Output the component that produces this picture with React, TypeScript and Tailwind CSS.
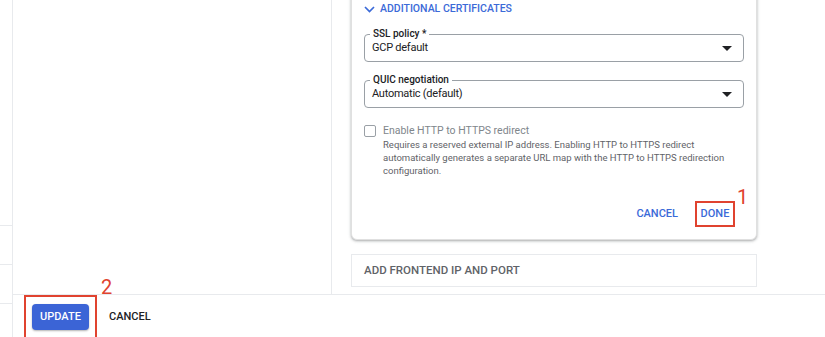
import React from "react";

const Caret = () => (
  <svg width="10" height="5" viewBox="0 0 10 5" className="shrink-0">
    <path d="M0 0 L10 0 L5 5 Z" fill="#202124" />
  </svg>
);

function Select({ label, value }: { label: string; value: string }) {
  return (
    <div className="relative h-[28px] w-[380px] rounded-[4px] border border-[#9aa0a6] flex items-center justify-between pl-[7px] pr-[11px]">
      <span className="absolute left-[5px] top-[-8px] bg-white px-[3px] text-[10px] leading-[14px] font-medium text-[#202124]">
        {label}
      </span>
      <span className="text-[11px] tracking-[-0.25px] text-[#202124]">{value}</span>
      <Caret />
    </div>
  );
}

export default function App() {
  return (
    <div
      className="w-[825px] h-[337px] bg-white flex overflow-hidden"
      style={{ fontFamily: "Roboto, 'Liberation Sans', sans-serif" }}
    >
      {/* left strip */}
      <div className="w-[13px] shrink-0 border-r border-[#e8eaed] flex flex-col">
        <div className="h-[225px]" />
        <div className="h-[39px] border-t border-[#e8eaed]" />
        <div className="h-[39px] border-t border-[#e8eaed]" />
        <div className="flex-1 border-t border-[#e8eaed]" />
      </div>

      <div className="flex-1 flex flex-col">
        {/* content */}
        <div className="h-[297px] flex overflow-hidden">
          <div className="w-[319px] shrink-0 border-r border-[#e8eaed]" />
          <div className="flex-1 pl-[19px] flex flex-col">
            <div className="w-[406px] -mt-[10px] bg-white rounded-b-[6px] border border-[#e0e0e0] shadow-[0_1px_2px_rgba(60,64,67,0.3),0_1px_3px_1px_rgba(60,64,67,0.12)] pl-[12px] pr-[12px] pb-[12px]">
              <div className="h-[10px]" />
              <div className="flex items-center gap-[5px] text-[10.5px] font-medium text-[#3b6ad8] h-[16px]">
                <svg width="11" height="7" viewBox="0 0 11 7">
                  <path d="M1 1 L5.5 5.5 L10 1" stroke="#3b6ad8" strokeWidth="1.7" fill="none" />
                </svg>
                <span>ADDITIONAL CERTIFICATES</span>
              </div>
              <div className="mt-[17px]">
                <Select label="SSL policy *" value="GCP default" />
              </div>
              <div className="mt-[18px]">
                <Select label="QUIC negotiation" value="Automatic (default)" />
              </div>
              <div className="mt-[16px] flex gap-[7px]">
                <div className="mt-[1px] w-[12px] h-[12px] shrink-0 rounded-[2px] border-[1.5px] border-[#9aa0a6]" />
                <div className="flex flex-col">
                  <span className="text-[10.5px] leading-[14px] text-[#80868b]">Enable HTTP to HTTPS redirect</span>
                  <span className="text-[9.5px] leading-[13px] text-[#5f6368] w-[360px]">
                    Requires a reserved external IP address. Enabling HTTP to HTTPS redirect automatically generates a separate URL map with the HTTP to HTTPS redirection configuration.
                  </span>
                </div>
              </div>
              <div className="mt-[24px] flex justify-end items-center pr-[9px]">
                <span className="text-[11px] font-medium text-[#3b6ad8] mr-[17px]">CANCEL</span>
                <div className="relative">
                  <div className="border-2 border-[#e0432f] w-[40px] h-[26px] flex items-center justify-center">
                    <span className="text-[11px] font-medium text-[#3b6ad8]">DONE</span>
                  </div>
                  <span className="absolute left-[42px] top-[-14px] text-[20px] leading-[20px] text-[#e0432f]">1</span>
                </div>
              </div>
            </div>
            <div className="mt-[14px] w-[406px] h-[33px] border border-[#e8eaed] flex items-center pl-[12px]">
              <span className="text-[11.5px] font-medium text-[#5f6368]">ADD FRONTEND IP AND PORT</span>
            </div>
          </div>
        </div>

        {/* footer */}
        <div className="flex-1 border-t border-[#e8eaed] flex items-start pl-[11px]">
          <div className="relative">
            <div className="border-2 border-[#e0432f] border-b-0 w-[73px] h-[42px] pt-[7px] pl-[6px]">
              <div className="w-[57px] h-[26px] rounded-[4px] bg-[#3b64d6] shadow-[0_1px_2px_rgba(0,0,0,0.3)] flex items-center justify-center">
                <span className="text-[11px] font-medium text-white">UPDATE</span>
              </div>
            </div>
            <span className="absolute left-[77px] top-[-18px] text-[20px] leading-[20px] text-[#e0432f]">2</span>
          </div>
          <span className="ml-[12px] mt-[14px] text-[11px] font-medium text-[#202124]">CANCEL</span>
        </div>
      </div>
    </div>
  );
}
